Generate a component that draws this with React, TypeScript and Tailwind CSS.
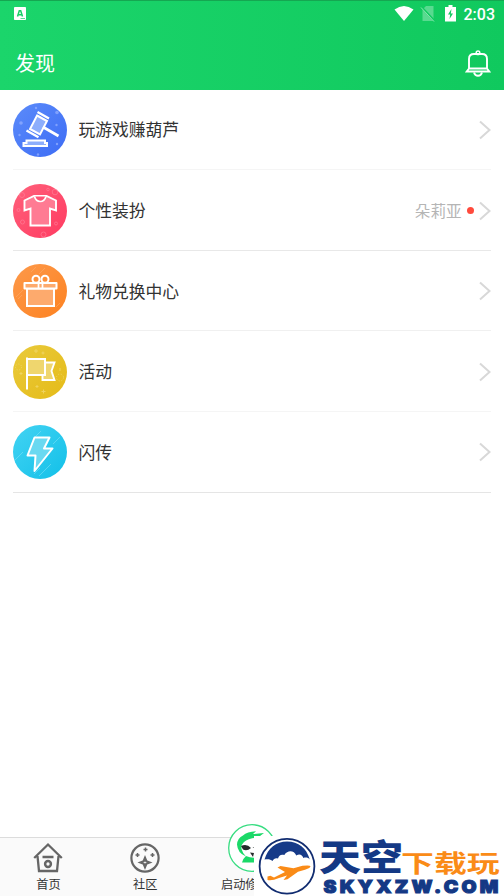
import type { ReactNode } from 'react'

interface MenuItem {
  label: string
  icon: ReactNode
  line: string
  extra?: string
}

function GavelIcon() {
  return (
    <svg width="54" height="54" viewBox="0 0 54 54" fill="none">
      <defs>
        <linearGradient id="blue" x1="0" y1="0" x2="1" y2="1">
          <stop stopColor="#5b8bfa" />
          <stop offset="1" stopColor="#3d6cf5" />
        </linearGradient>
      </defs>
      <circle cx="27" cy="27" r="27" fill="url(#blue)" />
      <g fill="#8eabff" opacity=".8">
        <circle cx="23" cy="5" r="1.2" />
        <circle cx="44" cy="9.500" r="1.8" />
        <circle cx="8" cy="20" r="1.8" />
        <circle cx="43.500" cy="22" r="1.2" />
        <circle cx="6.500" cy="32" r="1.2" />
        <circle cx="44" cy="41" r="1.2" />
        <circle cx="25" cy="51.500" r="1.2" />
      </g>
      <path d="M24 12.500 34 18 27 31.500 17 26z" fill="#8daefc" stroke="#fff" strokeWidth="2" />
      <path d="M24.500 9 36 15.500M13.500 27.500l12 6.800" stroke="#fff" strokeWidth="2.300" />
      <path d="M30 24 45.500 33" stroke="#fff" strokeWidth="2.700" />
      <path d="M13.500 37.500h18.500v2.500h2v3H10.500v-3h3z" fill="#8daefc" stroke="#fff" strokeWidth="2" />
    </svg>
  )
}

function ShirtIcon() {
  return (
    <svg width="54" height="54" viewBox="0 0 54 54" fill="none">
      <defs>
        <linearGradient id="pink" x1="0" y1="0" x2="1" y2="1">
          <stop stopColor="#ff607b" />
          <stop offset="1" stopColor="#ff3b61" />
        </linearGradient>
      </defs>
      <circle cx="27" cy="27" r="27" fill="url(#pink)" />
      <g stroke="#ff829b" strokeWidth="1" opacity=".65">
        <circle cx="9" cy="11" r="2.500" />
        <circle cx="42" cy="8" r="2.800" />
        <circle cx="35" cy="5.500" r="1.300" />
        <circle cx="5.500" cy="26" r="1.500" />
        <circle cx="9.500" cy="38" r="2" />
        <circle cx="43" cy="39.500" r="1.500" />
        <circle cx="30.500" cy="50.500" r="2.500" />
      </g>
      <path
        d="M21 12H33.500L43 16.500V26.500L37 24.500V41.500H17.500V24.500L11.500 26.500V16.500z"
        fill="#ff7b93"
        stroke="#fff"
        strokeWidth="1.900"
      />
      <path d="M21.500 12.500Q23 17.500 27.200 17.500T33 12.500" fill="#ff5274" stroke="#fff" strokeWidth="1.700" />
    </svg>
  )
}

function GiftIcon() {
  return (
    <svg width="54" height="54" viewBox="0 0 54 54" fill="none">
      <defs>
        <linearGradient id="orange" x1="0" y1="0" x2="1" y2="1">
          <stop stopColor="#fd994a" />
          <stop offset="1" stopColor="#fd8221" />
        </linearGradient>
      </defs>
      <circle cx="27" cy="27" r="27" fill="url(#orange)" />
      <path d="m18 8 5-5m3 7 6-6M3 33l7-7m-5 9 4-4M43 43l4-4" stroke="#ffb071" opacity=".5" />
      <path d="M14 24.500h27V42H14z" fill="#fdaa6d" stroke="#fff" strokeWidth="2" />
      <path d="M11.500 19h32v5.500h-32z" fill="#fdaa6d" stroke="#fff" strokeWidth="2" strokeLinejoin="round" />
      <path d="M25.500 19v6m4-6v6" stroke="#fff" strokeWidth="1.700" />
      <circle cx="23" cy="15.200" r="3.500" stroke="#fff" strokeWidth="2" />
      <circle cx="32" cy="15.200" r="3.500" stroke="#fff" strokeWidth="2" />
    </svg>
  )
}

function FlagIcon() {
  return (
    <svg width="54" height="54" viewBox="0 0 54 54" fill="none">
      <defs>
        <linearGradient id="yellow" x1="0" y1="0" x2="1" y2="1">
          <stop stopColor="#e9ca3b" />
          <stop offset="1" stopColor="#e5bb18" />
        </linearGradient>
      </defs>
      <circle cx="27" cy="27" r="27" fill="url(#yellow)" />
      <g stroke="#f3dc76" opacity=".7">
        <path d="M23 4v4m-2-2h4M30 6.500v3M28.500 8h3M24 40v3m-1.500-1.500h3M30.500 44.500v4m-2-2h4M8 27v3m-1.500-1.500h3M47 23v3" />
        <circle cx="5.500" cy="22" r="3" strokeDasharray="1.200 1.500" />
        <circle cx="47" cy="32.500" r="3.500" strokeDasharray="1.200 1.600" />
      </g>
      <path d="M32 17.500h9.500L38.500 26l3 9H29.500v-5H32z" fill="#efd66e" stroke="#fff" strokeWidth="1.900" />
      <path d="M14 14h18v16H14z" fill="#efd66e" stroke="#fff" strokeWidth="2" />
      <path d="M14 12.500v32" stroke="#fff" strokeWidth="2" />
    </svg>
  )
}

function FlashIcon() {
  return (
    <svg width="54" height="54" viewBox="0 0 54 54" fill="none">
      <defs>
        <linearGradient id="cyan" x1="0" y1="0" x2="1" y2="1">
          <stop stopColor="#43d3f3" />
          <stop offset="1" stopColor="#12c0e8" />
        </linearGradient>
      </defs>
      <circle cx="27" cy="27" r="27" fill="url(#cyan)" />
      <path d="m20 14 8-8m12 13 7-7M2 35l8-8m16 24 12-12M21 49l6-6" stroke="#87e6fa" opacity=".5" />
      <path
        d="M21.500 12.500H36.500L31 23.500h8.500L21.500 46l1-15.500H14.500z"
        fill="#6ad9f1"
        stroke="#fff"
        strokeWidth="2"
        strokeLinejoin="round"
      />
    </svg>
  )
}

const menuItems: MenuItem[] = [
  { label: '玩游戏赚葫芦', icon: <GavelIcon />, line: 'border-[#f5f5f5]' },
  { label: '个性装扮', icon: <ShirtIcon />, line: 'border-[#e8e8e8]', extra: '朵莉亚' },
  { label: '礼物兑换中心', icon: <GiftIcon />, line: 'border-[#f0f0f0]' },
  { label: '活动', icon: <FlagIcon />, line: 'border-[#f5f5f5]' },
  { label: '闪传', icon: <FlashIcon />, line: 'border-[#e5e5e5]' },
]

function StatusBar() {
  return (
    <div className="flex h-[27px] items-center border-t border-[#15a751] pr-[9px] pb-[1px] pl-[14px]">
      <svg width="12" height="13" viewBox="0 0 12 13">
        <rect width="12" height="13" rx=".8" fill="#fff" />
        <path d="M3.500 9.500 5.300 3.800h1.400l1.800 5.700M4.300 7.800h3.400" fill="none" stroke="#18cf66" strokeWidth="1.500" />
        <path d="M6.500 11.500H11" stroke="#18cf66" strokeWidth=".7" />
      </svg>
      <svg className="ml-auto" width="20" height="17" viewBox="0 0 20 17">
        <path d="M.5 4.500Q10-2.500 19.500 4.500L10 16z" fill="#fff" />
      </svg>
      <svg className="ml-[6px]" width="16" height="17" viewBox="0 0 16 17">
        <path d="M6 1h7.500v15H2.500V4.500z" fill="#fff" opacity=".3" />
        <path d="m1 1.500 14 15" stroke="#10cb60" strokeWidth="2" />
        <path d="m1 2.500 13 14" stroke="#8be5b0" strokeWidth="1" />
      </svg>
      <svg className="ml-[9px]" width="11" height="17" viewBox="0 0 11 17">
        <path d="M3.500 0h4v2H11v14.500H0V2h3.500z" fill="#fff" />
        <path d="M6.500 4 3 9.500h2.200L4.500 14 8 8.500H5.800z" fill="#12ca61" />
      </svg>
      <span className="ml-[8px] pt-[2px] font-[Roboto,sans-serif] text-[16px] leading-none font-medium text-white">
        2:03
      </span>
    </div>
  )
}

function BellIcon() {
  return (
    <svg width="26" height="27" viewBox="0 0 26 27" fill="none" stroke="#fff" strokeWidth="1.900">
      <circle cx="13" cy="2.800" r="1.800" strokeWidth="1.500" />
      <path d="M4 18.500V9q0-5 5-5h8q5 0 5 5v9.500l2.300 3H1.700zM3.500 18.500h19" />
      <path d="M9 22.500q1 3.200 4 3.200t4-3.200" />
    </svg>
  )
}

function MenuRow({ item }: { item: MenuItem }) {
  return (
    <div className={`flex h-[80.6px] items-center border-b pt-[1.2px] ${item.line}`}>
      {item.icon}
      <span className="ml-[11px] text-[16.8px] text-[#333]">{item.label}</span>
      <div className="ml-auto flex items-center">
        {item.extra && (
          <>
            <span className="text-[15.6px] text-[#b5b5b5]">{item.extra}</span>
            <span className="mr-[4.500px] ml-[5.500px] size-[7px] rounded-full bg-[#ff4a3c]" />
          </>
        )}
        <svg width="12" height="20" viewBox="0 0 12 20" fill="none">
          <path d="m1 1.500 9.500 8.500L1 18.500" stroke="#d8d8d8" strokeWidth="2" />
        </svg>
      </div>
    </div>
  )
}

function TabBar() {
  return (
    <nav className="flex h-[59px] border-t border-[#dcdcdc] bg-[#fafafa] text-[12.2px] leading-[18px] text-[#333]">
      <div className="flex w-[96.8px] flex-col items-center pt-[4px]">
        <svg width="30" height="32" viewBox="0 0 30 32" fill="none" stroke="#666" strokeWidth="2.300">
          <path d="M1.200 16 15 2.500 28.800 16M4.500 14l1.500 15h18L25.500 14M9.500 15h11" />
          <circle cx="15" cy="22" r="2.900" strokeWidth="2.500" />
        </svg>
        <span className="mt-[1px]">首页</span>
      </div>
      <div className="flex w-[96.8px] flex-col items-center pt-[4px]">
        <svg width="32" height="32" viewBox="0 0 32 32" fill="none" stroke="#666">
          <circle cx="16" cy="16" r="13.600" strokeWidth="2.200" />
          <path d="m16 16 1.300 3.200 3.200 1.300-3.200 1.300L16 25l-1.300-3.200-3.200-1.300 3.200-1.300z" strokeWidth="2.300" />
          <path d="M16.500 5.500v4m-2-2h4M8.500 11v4m-2-2h4M23.500 11v4m-2-2h4" strokeWidth="1.500" />
        </svg>
        <span className="mt-[1px]">社区</span>
      </div>
      <div className="-mt-[14px] flex w-[116.8px] flex-col items-center">
        <svg width="48" height="48" viewBox="0 0 48 48">
          <circle cx="24" cy="24" r="23.300" fill="#fff" stroke="#39dd82" strokeWidth="1.300" />
          <path
            d="M9 20.500Q9.500 14 15 11.500 19 7.500 28 7.200L25 10Q30 9.500 36 9L30 13.500Q20 14 16 18 13 20.500 13.500 25 14.500 29 18 32.500 9.500 29 9 20.500z"
            fill="#1bd968"
          />
          <path d="M13 22q6-2.500 10 2-4 3.500-8 1.500zM22 28.500l4 .5-1 4zM24.500 23.500l6-1.500v3z" fill="#252b2b" />
          <path d="M14 38.500q1-4 4-6.500 6 3 14 1v5.500z" fill="#1bd968" />
        </svg>
        <span className="mt-[3px] w-[62px]">启动修</span>
      </div>
    </nav>
  )
}

// 右下角站点标识
function SiteBadge() {
  return (
    <svg className="absolute top-[836px] left-[254px] overflow-visible" width="250" height="60" viewBox="254 836 250 60">
      <rect x="254" y="836" width="250" height="60" fill="#fff" />
      <circle cx="287" cy="866.300" r="27.400" fill="#fff" stroke="#112c70" strokeWidth="1.800" />
      <path
        d="M264.500 859.500C268 848 276 841.500 287 841.500c11.500 0 19.500 6.500 22.800 18-1.500-2-4-2.500-6.500-1.500-1-3.500-4-4.500-7-2.500-2-5-8.500-6-12-.5-3-1-5.500 0-6.300 3.500-2.500-1-4.500.5-5.500 2.500-2-2-5-2-8-1.500z"
        fill="#163a88"
      />
      <path
        d="M267.500 876.500l3-.8 3.500 1.800 11-5.500-7.500-4.500 3-1.500 13 2.300 9-2.500q7.500-.8 8 .4.200 1.600-5.500 3.600l-7 2-10.500 7.500-4 .7 3.500-4.500-8 2.500q-7 3-11.500 2z"
        fill="#fa8b17"
      />
      <text
        x="319"
        y="871"
        textLength="84"
        lengthAdjust="spacingAndGlyphs"
        fontSize="36"
        fontWeight="900"
        fontFamily="'Noto Sans CJK SC', sans-serif"
        fill="#143985"
      >
        天空
      </text>
      <text
        transform="translate(401 871.500) scale(1.400 1)"
        fontSize="23.500"
        fontWeight="700"
        fontFamily="'Noto Sans CJK SC', sans-serif"
        fill="#fa8b17"
      >
        下载玩
      </text>
      <text
        transform="translate(323.500 892.500) scale(1.080 1)"
        textLength="162"
        lengthAdjust="spacing"
        fontSize="18"
        fontWeight="900"
        fontFamily="Inter, sans-serif"
        fill="#143985"
        stroke="#143985"
        strokeWidth="1.100"
      >
        SKYXZW.COM
      </text>
    </svg>
  )
}

export default function App() {
  return (
    <div className="relative flex h-[896px] w-[504px] flex-col overflow-hidden bg-white font-['Noto_Sans_CJK_SC',sans-serif]">
      <header className="h-[89.6px] shrink-0 bg-linear-to-r from-[#1bd56b] to-[#10c95e]">
        <StatusBar />
        <div className="flex h-[62px] items-center justify-between pt-[10px] pr-[13px] pl-[15px]">
          <h1 className="text-[20px] text-white">发现</h1>
          <BellIcon />
        </div>
      </header>
      <main className="flex-1 px-[13.400px]">
        {menuItems.map(item => (
          <MenuRow key={item.label} item={item} />
        ))}
      </main>
      <TabBar />
      <SiteBadge />
    </div>
  )
}
